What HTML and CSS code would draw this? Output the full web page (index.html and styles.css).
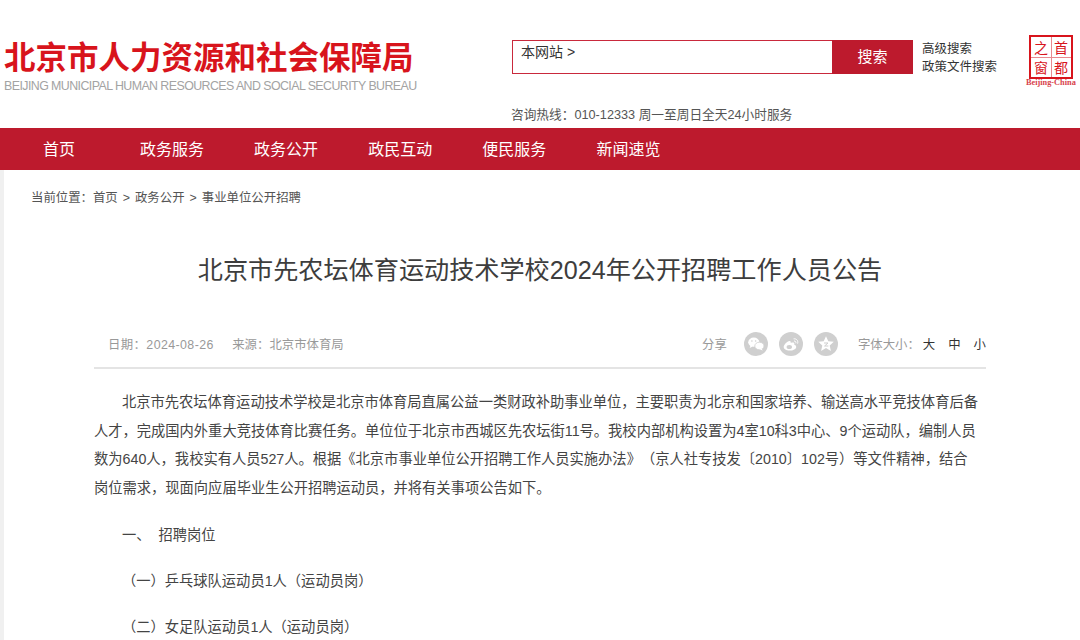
FILE: index.html
```html
<!DOCTYPE html>
<html lang="zh-CN">
  <head>
    <meta charset="UTF-8">
    <title>北京市先农坛体育运动技术学校2024年公开招聘工作人员公告</title>
    <link rel="stylesheet" href="styles.css">
  </head>
  <body>
    <header class="header">
      <div class="logo">
        <div class="logo-cn">北京市人力资源和社会保障局</div>
        <div class="logo-en">BEIJING MUNICIPAL HUMAN RESOURCES AND SOCIAL SECURITY BUREAU</div>
      </div>
      <div class="search-area">
        <div class="search-row">
          <div class="search-box">
            <div class="search-input">本网站 &gt;</div>
            <div class="search-btn">搜索</div>
          </div>
          <div class="search-links">
            <a>高级搜索</a>
            <a>政策文件搜索</a>
          </div>
        </div>
        <div class="hotline">咨询热线：010-12333 周一至周日全天24小时服务</div>
      </div>
      <div class="stamp">
        <div class="stamp-box">
          <span>之</span><span>首</span><span>窗</span><span>都</span>
        </div>
        <div class="stamp-en">Beijing-China</div>
      </div>
    </header>

    <nav class="nav">
      <a class="nav-home">首页</a>
      <a>政务服务</a>
      <a>政务公开</a>
      <a>政民互动</a>
      <a>便民服务</a>
      <a>新闻速览</a>
    </nav>

    <main class="page">
      <div class="crumbs">当前位置：首页<i>&gt;</i>政务公开<i>&gt;</i>事业单位公开招聘</div>
      <h1 class="title">北京市先农坛体育运动技术学校2024年公开招聘工作人员公告</h1>
      <div class="meta">
        <div class="meta-left">
          <span class="meta-date">日期：2024-08-26</span>
          <span>来源：北京市体育局</span>
        </div>
        <div class="meta-right">
          <span class="share-label">分享</span>
          <span class="share-icons">
            <svg class="share-icon" viewBox="0 0 24 24">
              <circle cx="12" cy="12" r="12" fill="#cfcfcf"/>
              <ellipse cx="9.8" cy="10.2" rx="5.6" ry="4.6" fill="#fff"/>
              <path d="M6.5 13.5l-.8 2.6 3-1.5z" fill="#fff"/>
              <ellipse cx="15.4" cy="14" rx="4.6" ry="3.8" fill="#fff" stroke="#cfcfcf" stroke-width=".8"/>
              <path d="M17.6 16.8l1.2 1.8-3-1z" fill="#fff"/>
              <circle cx="7.9" cy="9" r=".8" fill="#cfcfcf"/>
              <circle cx="11.6" cy="9" r=".8" fill="#cfcfcf"/>
            </svg>
            <svg class="share-icon" viewBox="0 0 24 24">
              <circle cx="12" cy="12" r="12" fill="#cfcfcf"/>
              <path d="M10.5 18.6c-3.2 0-5.8-1.5-5.8-3.6 0-2.300 3.400-5.900 5.800-6.100 1.200-.1 1.500 1 1.200 2.100 1.800-.7 3.700-.7 3.700.8 0 .4-.1.7-.2 1 1.300.4 2 1.100 2 2.100 0 2-3 3.700-6.700 3.700z" fill="#fff"/>
              <ellipse cx="10.300" cy="15" rx="2.700" ry="2.100" fill="#cfcfcf"/>
              <path d="M15 6.800c2.600-.3 4.400 1.800 3.700 4.400M15.400 9c1.200-.1 1.800.8 1.500 1.900" fill="none" stroke="#fff" stroke-width="1" stroke-linecap="round"/>
            </svg>
            <svg class="share-icon" viewBox="0 0 24 24">
              <circle cx="12" cy="12" r="12" fill="#cfcfcf"/>
              <path d="M12 4.200l2.300 5 5.500.6-4.100 3.700 1.200 5.400-4.900-2.800-4.900 2.800 1.200-5.400-4.100-3.700 5.500-.6z" fill="#fff"/>
              <path d="M10 11h4l-3.400 3h3.800" fill="none" stroke="#cfcfcf" stroke-width="1"/>
            </svg>
          </span>
          <span class="size-label">字体大小：</span>
          <span class="size-opts"><a>大</a><a>中</a><a>小</a></span>
        </div>
      </div>
      <article class="article">
        <p class="para">北京市先农坛体育运动技术学校是北京市体育局直属公益一类财政补助事业单位，主要职责为北京和国家培养、输送高水平竞技体育后备人才，完成国内外重大竞技体育比赛任务。单位位于北京市西城区先农坛街11号。我校内部机构设置为4室10科3中心、9个运动队，编制人员数为640人，我校实有人员527人。根据《北京市事业单位公开招聘工作人员实施办法》（京人社专技发〔2010〕102号）等文件精神，结合<br>岗位需求，现面向应届毕业生公开招聘运动员，并将有关事项公告如下。</p>
        <p class="para sec">一、&nbsp; 招聘岗位</p>
        <p class="para sub">（一）乒乓球队运动员1人（运动员岗）</p>
        <p class="para sub">（二）女足队运动员1人（运动员岗）</p>
      </article>
    </main>
  </body>
</html>
```

FILE: styles.css
```css
*{
  margin: 0;
  padding: 0;
  box-sizing: border-box;
}
html, body{
  height: 640px;
  overflow: hidden;
}
body{
  background-color: #fff;
  color: #333;
  font-family: "Liberation Sans", "Noto Sans CJK SC", sans-serif;
  text-spacing-trim: space-all;
}

/* header */
.header{
  display: flex;
  height: 128px;
  padding-left: 4px;
}
.logo{
  width: 508px;
  padding-top: 36px;
}
.logo-cn{
  width: 420px;
  font-family: "Noto Sans CJK SC", sans-serif;
  font-size: 31.5px;
  line-height: 38px;
  font-weight: 700;
  color: #d8141c;
  white-space: nowrap;
}
.logo-en{
  margin-top: 5px;
  font-size: 12.4px;
  line-height: 15px;
  letter-spacing: -0.57px;
  color: #a3a3a3;
  white-space: nowrap;
}
.search-area{
  width: 517px;
  padding-top: 40px;
}
.search-row{
  display: flex;
}
.search-box{
  display: flex;
  width: 401px;
  height: 34px;
  border: 1px solid #c9293c;
}
.search-input{
  flex: 1;
  padding-left: 8px;
  font-size: 14px;
  line-height: 22px;
  color: #333;
}
.search-btn{
  width: 81px;
  margin: -1px -1px -1px 0;
  background-color: #bd1a2d;
  color: #fff;
  font-size: 15px;
  line-height: 34px;
  text-align: center;
}
.search-links{
  display: flex;
  flex-direction: column;
  margin-left: 9px;
  font-size: 12.5px;
  line-height: 18px;
  color: #333;
}
.hotline{
  margin: 30px 0 0 -1px;
  font-size: 12.7px;
  line-height: 18px;
  color: #555;
}
.stamp{
  width: 50px;
  padding-top: 35px;
}
.stamp-box{
  display: grid;
  grid-template-columns: 1fr 1fr;
  grid-template-rows: 1fr 1fr;
  width: 44px;
  height: 44px;
  border: 2px solid #d8141c;
  background-image: linear-gradient(#e98a8f, #e98a8f), linear-gradient(#e98a8f, #e98a8f);
  background-size: 1px 100%, 100% 1px;
  background-position: center, center;
  background-repeat: no-repeat;
}
.stamp-box span{
  font-family: "Noto Sans CJK SC", sans-serif;
  font-size: 14px;
  line-height: 20px;
  text-align: center;
  color: #d8141c;
}
.stamp-en{
  margin: 1px 0 0 -3px;
  font-family: "Liberation Serif", serif;
  font-size: 8.3px;
  font-weight: 700;
  line-height: 6px;
  color: #d8434c;
  white-space: nowrap;
}

/* nav */
.nav{
  display: flex;
  height: 42px;
  padding-left: 43px;
  background-color: #bd1a2d;
  color: #fff;
  font-size: 16px;
  line-height: 44px;
}
.nav a{
  width: 114.100px;
}
.nav a.nav-home{
  width: 97px;
}

/* article */
.page{
  height: 470px;
  padding: 0 94px 0 90px;
  border-left: 4px solid #f0f0f0;
}
.crumbs{
  margin-left: -63px;
  padding-top: 19px;
  font-size: 12.4px;
  line-height: 18px;
  color: #555;
}
.crumbs i{
  margin: 0 5px;
  font-style: normal;
}
.title{
  margin-top: 45px;
  font-size: 25.150px;
  font-weight: 400;
  line-height: 36px;
  text-align: center;
  color: #3d3d3d;
  white-space: nowrap;
}
.meta{
  display: flex;
  justify-content: space-between;
  align-items: center;
  height: 48px;
  margin-top: 33px;
  padding: 0 0 0 14px;
  border-bottom: 2px solid #e4e4e4;
  font-size: 12.4px;
  color: #999;
}
.meta-date{
  letter-spacing: .4px;
}
.meta-left span + span{
  margin-left: 15px;
}
.meta-right{
  display: flex;
  align-items: center;
}
.share-icons{
  display: flex;
  gap: 11px;
  margin-left: 17px;
}
.share-icon{
  width: 24px;
  height: 24px;
}
.size-label{
  margin-left: 20px;
}
.size-opts{
  display: flex;
  gap: 13px;
  margin-left: 3px;
  color: #333;
}
.para{
  font-size: 14.270px;
  line-height: 28.600px;
  text-indent: 28px;
  color: #444;
}
.article{
  padding: 19px 0 0 0;
}
.sec{
  margin-top: 18.400px;
}
.sub{
  margin-top: 17.700px;
}
```
